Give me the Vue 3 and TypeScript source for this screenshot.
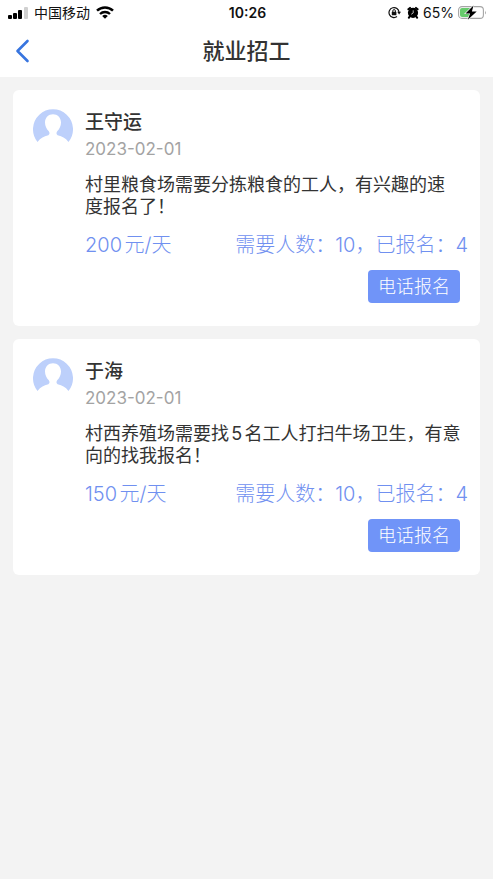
<script setup lang="ts">
interface Job {
  id: number
  name: string
  date: string
  description: string
  wage: string
  needed: number
  applied: number
}

const jobs: Job[] = [
  {
    id: 1,
    name: '王守运',
    date: '2023-02-01',
    description: '村里粮食场需要分拣粮食的工人，有兴趣的速\n度报名了！',
    wage: '200元/天',
    needed: 10,
    applied: 4,
  },
  {
    id: 2,
    name: '于海',
    date: '2023-02-01',
    description: '村西养殖场需要找5名工人打扫牛场卫生，有意\n向的找我报名！',
    wage: '150元/天',
    needed: 10,
    applied: 4,
  },
]
</script>

<template>
  <div class="page" lang="zh-CN">
    <header class="top">
      <div class="status">
        <div class="status-left">
          <svg class="signal" width="20" height="12" viewBox="0 0 20 12" aria-hidden="true">
            <rect x="0" y="8" width="4" height="4" rx="1" />
            <rect x="5" y="6" width="4" height="6" rx="1" />
            <rect x="10" y="3" width="4" height="9" rx="1" />
            <rect x="16" y="0" width="4" height="12" rx="1" fill="#d0d0d0" />
          </svg>
          <span>中国移动</span>
          <svg width="18" height="13" viewBox="0 0 18 13" aria-hidden="true">
            <path d="M1 4.7a11.6 11.6 0 0 1 16 0" fill="none" stroke="#000" stroke-width="2.5" />
            <path d="M4 8a7.2 7.2 0 0 1 10 0" fill="none" stroke="#000" stroke-width="2.3" />
            <path d="M9 12.8 6.2 10a4 4 0 0 1 5.6 0z" />
          </svg>
        </div>
        <span class="clock">10:26</span>
        <div class="status-right">
          <svg width="13" height="13" viewBox="0 0 13 13" aria-hidden="true">
            <path d="M9 10.6A5 5 0 1 1 11 6.3" fill="none" stroke="#111" stroke-width="1.2" />
            <path d="M9.2 5.8h3.8l-1.9 2.7z" fill="#111" />
            <rect x="3.8" y="5.8" width="4.6" height="3.5" rx=".6" fill="#111" />
            <path d="M4.8 6V4.9a1.3 1.3 0 0 1 2.6 0V6" fill="none" stroke="#111" />
          </svg>
          <svg class="alarm" width="12" height="13" viewBox="0 0 12 13" aria-hidden="true">
            <circle cx="6" cy="6.8" r="5.1" />
            <path d="M1.4 3.3 3 1.9M10.6 3.3 9 1.9M2.5 10.7l-.6.9M9.5 10.7l.6.9" stroke="#000" stroke-width="2" stroke-linecap="round" />
            <path d="M6.2 4.3V7L4.2 8.3" fill="none" stroke="#ddd" stroke-width=".8" />
          </svg>
          <span>65%</span>
          <svg width="29" height="15" viewBox="0 0 29 15" aria-hidden="true">
            <rect x=".6" y="1.6" width="24.8" height="11.8" rx="3.4" fill="#fff" stroke="#a5a5a5" stroke-width="1.1" />
            <path d="M4 3h8v9H4a2 2 0 0 1-2-2V5a2 2 0 0 1 2-2z" fill="#67cb6c" />
            <path d="M27 5.5q1.6 2 0 4z" fill="#a5a5a5" />
            <path d="M15.5.5 7.5 8.500h4.600l-2.300 6.200 8.900-8.300h-4.800z" fill="#000" stroke="#fff" stroke-width="1.200" paint-order="stroke" />
          </svg>
        </div>
      </div>
      <div class="nav">
        <button class="back" type="button" aria-label="返回">
          <svg width="16" height="24" viewBox="0 0 16 24" aria-hidden="true">
            <path d="M13.500 2 3.500 12l10 10" fill="none" stroke="#3875df" stroke-width="2.600" stroke-linecap="round" stroke-linejoin="round" />
          </svg>
        </button>
        <h1>就业招工</h1>
      </div>
    </header>

    <main class="list">
      <article v-for="job in jobs" :key="job.id" class="card">
        <svg class="avatar" width="40" height="40" viewBox="0 0 40 40" aria-hidden="true">
          <path d="M4.500 33A20 20 0 1 1 35.500 33C32.500 29 28.500 27.600 25.500 26.600C23.300 25.600 23 24 24.200 22.200C26.500 20 28 17 28 13.500C28 8.500 24.500 5.200 20 5.200S12 8.500 12 13.500C12 17 13.500 20 15.800 22.200C17 24 16.700 25.600 14.500 26.600C11.500 27.600 7.500 29 4.500 33Z" fill="#bdd0fb" />
        </svg>
        <div class="content">
          <h2>{{ job.name }}</h2>
          <time :datetime="job.date">{{ job.date }}</time>
          <p class="description">{{ job.description }}</p>
          <div class="facts">
            <span>{{ job.wage }}</span>
            <span>需要人数：{{ job.needed }}，已报名：{{ job.applied }}</span>
          </div>
          <button class="apply" type="button">电话报名</button>
        </div>
      </article>
    </main>
  </div>
</template>

<style>
body {
  margin: 0;
  background: #f3f3f3;
}
</style>

<style scoped>
.page {
  min-height: 100vh;
  background: #f3f3f3;
  color: #333;
  font-family: Inter, "Noto Sans CJK SC", sans-serif;
  text-autospace: normal;
}

.top {
  background: #fff;
}

.status {
  display: grid;
  grid-template-columns: 1fr auto 1fr;
  align-items: center;
  height: 25px;
  padding: 0 6px 0 8px;
  color: #111;
  font-size: 14px;
  line-height: 24px;
}

.status-left,
.status-right {
  display: flex;
  align-items: center;
  gap: 6px;
}

.status-right {
  justify-content: flex-end;
  gap: 4px;
}

.alarm {
  margin-left: 2px;
}

.clock {
  font-weight: 600;
}

.nav {
  display: grid;
  grid-template-columns: 48px 1fr 48px;
  align-items: center;
  height: 52px;
}

.back {
  display: flex;
  align-items: center;
  height: 48px;
  padding: 0 0 0 14px;
  border: 0;
  background: none;
  cursor: pointer;
}

h1 {
  margin: 0;
  font-size: 22px;
  font-weight: 500;
  line-height: 32px;
  text-align: center;
}

.list {
  display: flex;
  flex-direction: column;
  gap: 13px;
  padding: 13px;
}

.card {
  display: flex;
  align-items: flex-start;
  gap: 12px;
  padding: 19px 12px 23px 20px;
  border-radius: 6px;
  background: #fff;
}

.avatar {
  flex: none;
}

.content {
  display: flex;
  flex: 1;
  flex-direction: column;
  min-width: 0;
}

h2 {
  margin: 0;
  font-size: 19px;
  font-weight: 500;
  line-height: 28px;
}

time {
  color: #a3a3a3;
  font-size: 17px;
  line-height: 24px;
}

.description {
  margin: 13px 0 15px;
  font-size: 18px;
  line-height: 22px;
  white-space: pre-line;
}

.facts {
  display: flex;
  justify-content: space-between;
  color: #7090f0;
  font-size: 20px;
  font-weight: 300;
  line-height: 24px;
  white-space: nowrap;
}

.apply {
  align-self: flex-end;
  height: 33px;
  margin: 13px 8px 0 0;
  padding: 0 10px;
  border: 0;
  border-radius: 4px;
  background: #7094f8;
  color: #fff;
  font-family: inherit;
  font-size: 18px;
  font-weight: 300;
  line-height: 33px;
  cursor: pointer;
}
</style>
